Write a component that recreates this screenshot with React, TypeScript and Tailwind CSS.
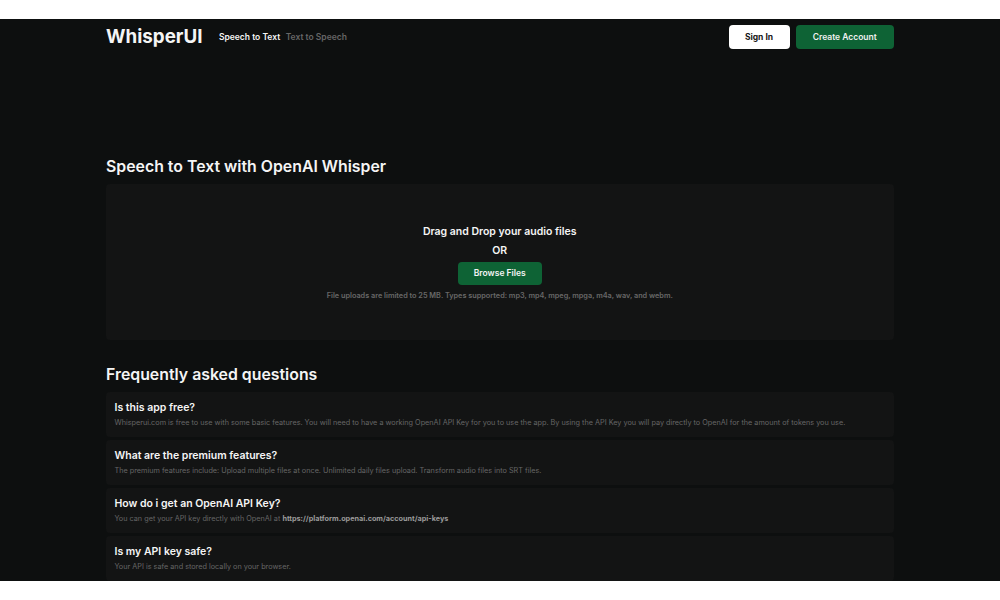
const faqs: { q: string; a: React.ReactNode }[] = [
  {
    q: "Is this app free?",
    a: "Whisperui.com is free to use with some basic features. You will need to have a working OpenAI API Key for you to use the app. By using the API Key you will pay directly to OpenAI for the amount of tokens you use.",
  },
  {
    q: "What are the premium features?",
    a: "The premium features include: Upload multiple files at once. Unlimited daily files upload. Transform audio files into SRT files.",
  },
  {
    q: "How do i get an OpenAI API Key?",
    a: (
      <>
        You can get your API key directly with OpenAI at{" "}
        <span className="font-bold text-[#9a9a9a]">https://platform.openai.com/account/api-keys</span>
      </>
    ),
  },
  { q: "Is my API key safe?", a: "Your API is safe and stored locally on your browser." },
];

export default function App() {
  return (
    <div className="h-[600px] w-[1000px] overflow-hidden bg-white font-['Inter',sans-serif]">
      <div className="mt-[19px] h-[562px] overflow-hidden bg-[#0d0f0f] pl-[106px] pr-[106.5px] text-[#f5f5f5]">
        <header className="flex h-[36px] items-center justify-between">
          <div className="flex items-center">
            <span className="text-[18.8px] font-bold leading-none">WhisperUI</span>
            <span className="ml-[16.5px] text-[8.5px] font-semibold">Speech to Text</span>
            <span className="ml-[5.5px] text-[8.5px] font-semibold text-[#666666]">Text to Speech</span>
          </div>
          <div className="flex gap-[6.5px]">
            <button className="h-[23.5px] w-[61px] rounded bg-white text-[8.5px] font-bold text-[#171717]">Sign In</button>
            <button className="h-[23.5px] w-[97.5px] rounded bg-[#0e6335] text-[8.5px] font-semibold text-[#f0f0f0]">Create Account</button>
          </div>
        </header>
        <h1 className="mt-[102px] text-[15.85px] font-semibold leading-[20px]">Speech to Text with OpenAI Whisper</h1>
        <section className="mt-[7px] flex h-[156px] flex-col items-center justify-center rounded-sm bg-[#131414] pt-[2px]">
          <p className="text-[10.5px] font-semibold leading-[16px]">Drag and Drop your audio files</p>
          <p className="mt-[3px] text-[10.5px] font-semibold leading-[16px]">OR</p>
          <button className="mt-[3px] h-[23px] w-[84px] rounded bg-[#0e6335] text-[8.5px] font-semibold">Browse Files</button>
          <p className="mt-[5px] text-[7.3px] font-semibold leading-[12px] text-[#686868]">File uploads are limited to 25 MB. Types supported: mp3, mp4, mpeg, mpga, m4a, wav, and webm.</p>
        </section>
        <h2 className="mt-[25px] text-[15.85px] font-semibold leading-[20px]">Frequently asked questions</h2>
        <div className="mt-[7px] flex flex-col gap-[3.5px]">
          {faqs.map((f) => (
            <div key={f.q} className="h-[44.5px] rounded-sm bg-[#131414] pl-[8.5px] pr-[8px] pt-[9px]">
              <h3 className="text-[10.5px] font-semibold leading-[14px]">{f.q}</h3>
              <p className="mt-[1.5px] text-[7.27px] leading-[12px] text-[#666666]">{f.a}</p>
            </div>
          ))}
        </div>
      </div>
    </div>
  );
}
